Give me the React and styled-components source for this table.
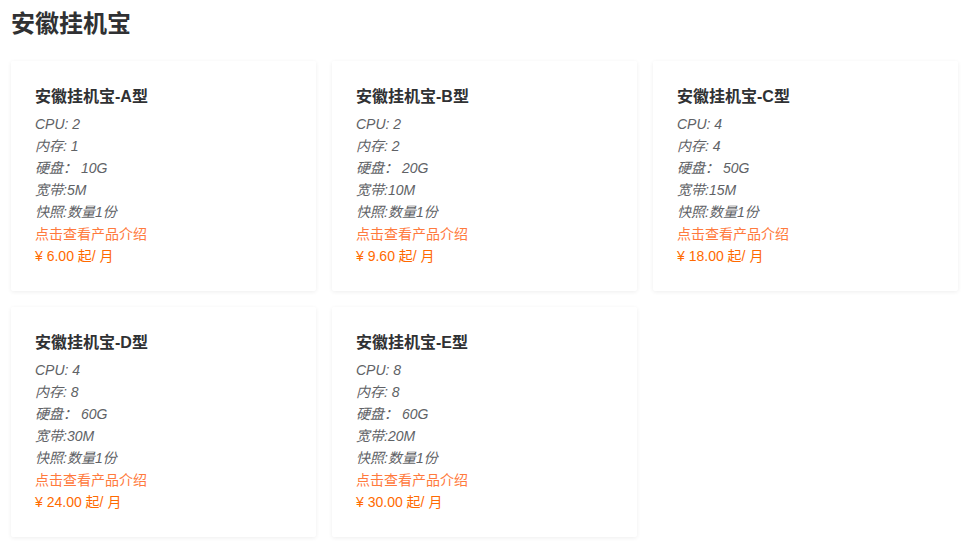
import styled, { createGlobalStyle } from "styled-components";

const GlobalStyle = createGlobalStyle`
  html, body {
    margin: 0;
    padding: 0;
    background: #fff;
  }
  body {
    font-family: "Liberation Sans", Arial, "Noto Sans CJK SC", sans-serif;
  }
`;

const Page = styled.div`
  width: 962px;
  padding: 7px 4px 12px 11px;
  box-sizing: border-box;
`;

const Heading = styled.h2`
  margin: 0 0 20px;
  font-size: 24px;
  line-height: 34px;
  font-weight: bold;
  color: #303133;
`;

const Grid = styled.div`
  display: grid;
  grid-template-columns: repeat(3, 305px);
  gap: 16px;
`;

const Card = styled.div`
  height: 230px;
  box-sizing: border-box;
  padding: 25px 23px 24px 24px;
  background: #fff;
  border-radius: 2px;
  box-shadow: 0 1px 4px rgba(0, 0, 0, 0.07);
`;

const Name = styled.div`
  font-size: 16px;
  line-height: 22px;
  font-weight: bold;
  color: #303133;
  margin-bottom: 5px;
`;

const Spec = styled.div`
  font-size: 14px;
  line-height: 22px;
  font-style: italic;
  color: #606266;
`;

const Link = styled.a`
  display: block;
  font-size: 14px;
  line-height: 22px;
  color: #ff7a3d;
  text-decoration: none;
  cursor: pointer;
`;

const Price = styled.div`
  font-size: 14px;
  line-height: 22px;
  color: #ff6a00;
`;

const plans = [
  { type: "A", cpu: 2, mem: 1, disk: "10G", bw: "5M", price: "6.00" },
  { type: "B", cpu: 2, mem: 2, disk: "20G", bw: "10M", price: "9.60" },
  { type: "C", cpu: 4, mem: 4, disk: "50G", bw: "15M", price: "18.00" },
  { type: "D", cpu: 4, mem: 8, disk: "60G", bw: "30M", price: "24.00" },
  { type: "E", cpu: 8, mem: 8, disk: "60G", bw: "20M", price: "30.00" },
];

const App = () => {
  return (
    <Page>
      <GlobalStyle />
      <Heading>安徽挂机宝</Heading>
      <Grid>
        {plans.map((p) => (
          <Card key={p.type}>
            <Name>安徽挂机宝-{p.type}型</Name>
            <Spec>CPU: {p.cpu}</Spec>
            <Spec>内存: {p.mem}</Spec>
            <Spec>硬盘： {p.disk}</Spec>
            <Spec>宽带:{p.bw}</Spec>
            <Spec>快照:数量1份</Spec>
            <Link>点击查看产品介绍</Link>
            <Price>¥ {p.price} 起/ 月</Price>
          </Card>
        ))}
      </Grid>
    </Page>
  );
};

export default App;
